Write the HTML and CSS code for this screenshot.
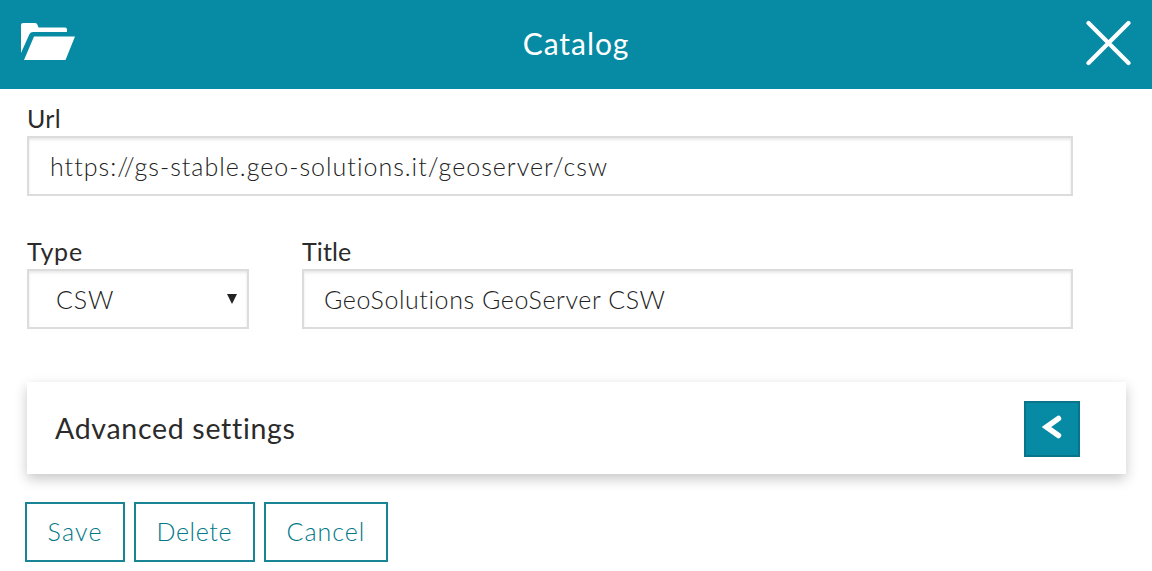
FILE: index.html
```html
<!DOCTYPE html>
<html lang="en">
<head>
<meta charset="utf-8">
<title>Catalog</title>
<link rel="stylesheet" href="styles.css">
</head>
<body>
<header class="header">
  <svg class="folder" width="54" height="37" viewBox="0 0 54 37" fill="#fff"><path d="M0 30V2Q0 0 2 0H14Q16 0 16.600 2L17.500 4.500H44Q46 4.500 46 6.500V9H12Q9.500 9 8.500 11ZM13 13.500H54L44.500 37H3Z"/></svg>
  <h1 class="title"><span class="t-catalog">Catalog</span></h1>
  <svg class="close" width="46" height="46" viewBox="0 0 46 46" fill="none" stroke="#fff" stroke-width="4.200" stroke-linecap="round"><path d="M3.500 3L43.500 43M43.500 3L3.500 43"/></svg>
</header>
<main class="content">
  <div class="field">
    <div class="label"><span class="t-url">Url</span></div>
    <div class="input"><span class="t-address">https://gs-stable.geo-solutions.it/geoserver/csw</span></div>
  </div>
  <div class="row">
    <div class="field type">
      <div class="label"><span class="t-type">Type</span></div>
      <div class="input select"><span class="t-csw">CSW</span><svg width="10" height="10" viewBox="0 0 10 10"><path d="M0 0H10L5 10Z" fill="#222"/></svg></div>
    </div>
    <div class="field name">
      <div class="label"><span class="t-title">Title</span></div>
      <div class="input"><span class="t-name">GeoSolutions GeoServer CSW</span></div>
    </div>
  </div>
  <section class="panel">
    <h2 class="panel-title"><span class="t-advanced">Advanced settings</span></h2>
    <div class="toggle"><svg width="20" height="24" viewBox="0 0 20 24" fill="none" stroke="#fff" stroke-width="5.500"><path d="M16.500 3.500L4.500 12L16.500 20.500" stroke-linecap="round"/></svg></div>
  </section>
  <div class="actions">
    <div class="button save"><span class="t-save">Save</span></div>
    <div class="button delete"><span class="t-delete">Delete</span></div>
    <div class="button cancel"><span class="t-cancel">Cancel</span></div>
  </div>
</main>
</body>
</html>
```
FILE: styles.css
```css
* { box-sizing: border-box; }
body { margin: 0; height: 571px; overflow: hidden; background: #fff; color: #2b2b2b; font-family: Lato, sans-serif; font-size: 25px; white-space: nowrap; font-variant-ligatures: none; }
svg { display: block; flex: none; }
.header { height: 89px; background: #078aa3; color: #fff; display: grid; grid-template-columns: 1fr auto 1fr; align-items: center; padding: 0 21px 3px 21px; }
.title { margin: 0; font-size: 30px; font-weight: 400; line-height: 40px; }
.folder { margin-bottom: 3px; }
.close { justify-self: end; }
.content { padding: 15px 26px 0 27px; }
.field { width: 1046px; }
.label { height: 32px; line-height: 28px; }
.input { height: 60px; border: 2px solid #dcdcdc; box-shadow: inset 0 2px 3px rgba(0,0,0,.09); padding: 0 20px 1px; display: flex; align-items: center; color: #222; font-weight: 300; }
.row { display: flex; gap: 53px; margin-top: 41px; }
.type { width: 222px; }
.name { width: 771px; }
.select { justify-content: space-between; padding: 0 10px 1px 27px; }
.panel { margin-top: 53px; height: 92px; padding: 0 46px 0 28px; display: flex; align-items: center; justify-content: space-between; box-shadow: 0 5px 12px rgba(0,0,0,.22); }
.panel-title { margin: 0; font-size: 28.500px; font-weight: 400; line-height: 40px; }
.toggle { width: 56px; height: 56px; margin-top: 2px; background: #078aa3; border: 2px solid #08758a; display: flex; align-items: center; justify-content: center; padding-bottom: 4px; }
.actions { display: flex; gap: 9px; margin: 28px 0 0 -2px; }
.button { height: 60px; border: 2px solid #188494; color: #007888; display: flex; align-items: center; padding: 0 0 2px 20.500px; font-weight: 300; }
.save { width: 100px; }
.delete { width: 121px; }
.cancel { width: 124px; }
.t-catalog { letter-spacing: .95px; }
.t-url { letter-spacing: .3px; }
.t-address { margin-left: 1px; letter-spacing: 1px; }
.t-type { letter-spacing: .8px; }
.t-title { letter-spacing: .1px; }
.t-csw { letter-spacing: .9px; }
.t-name { letter-spacing: .58px; }
.t-advanced { letter-spacing: .7px; }
.t-save { letter-spacing: 1.200px; }
.t-delete { letter-spacing: .6px; }
.t-cancel { letter-spacing: 1px; }
```
